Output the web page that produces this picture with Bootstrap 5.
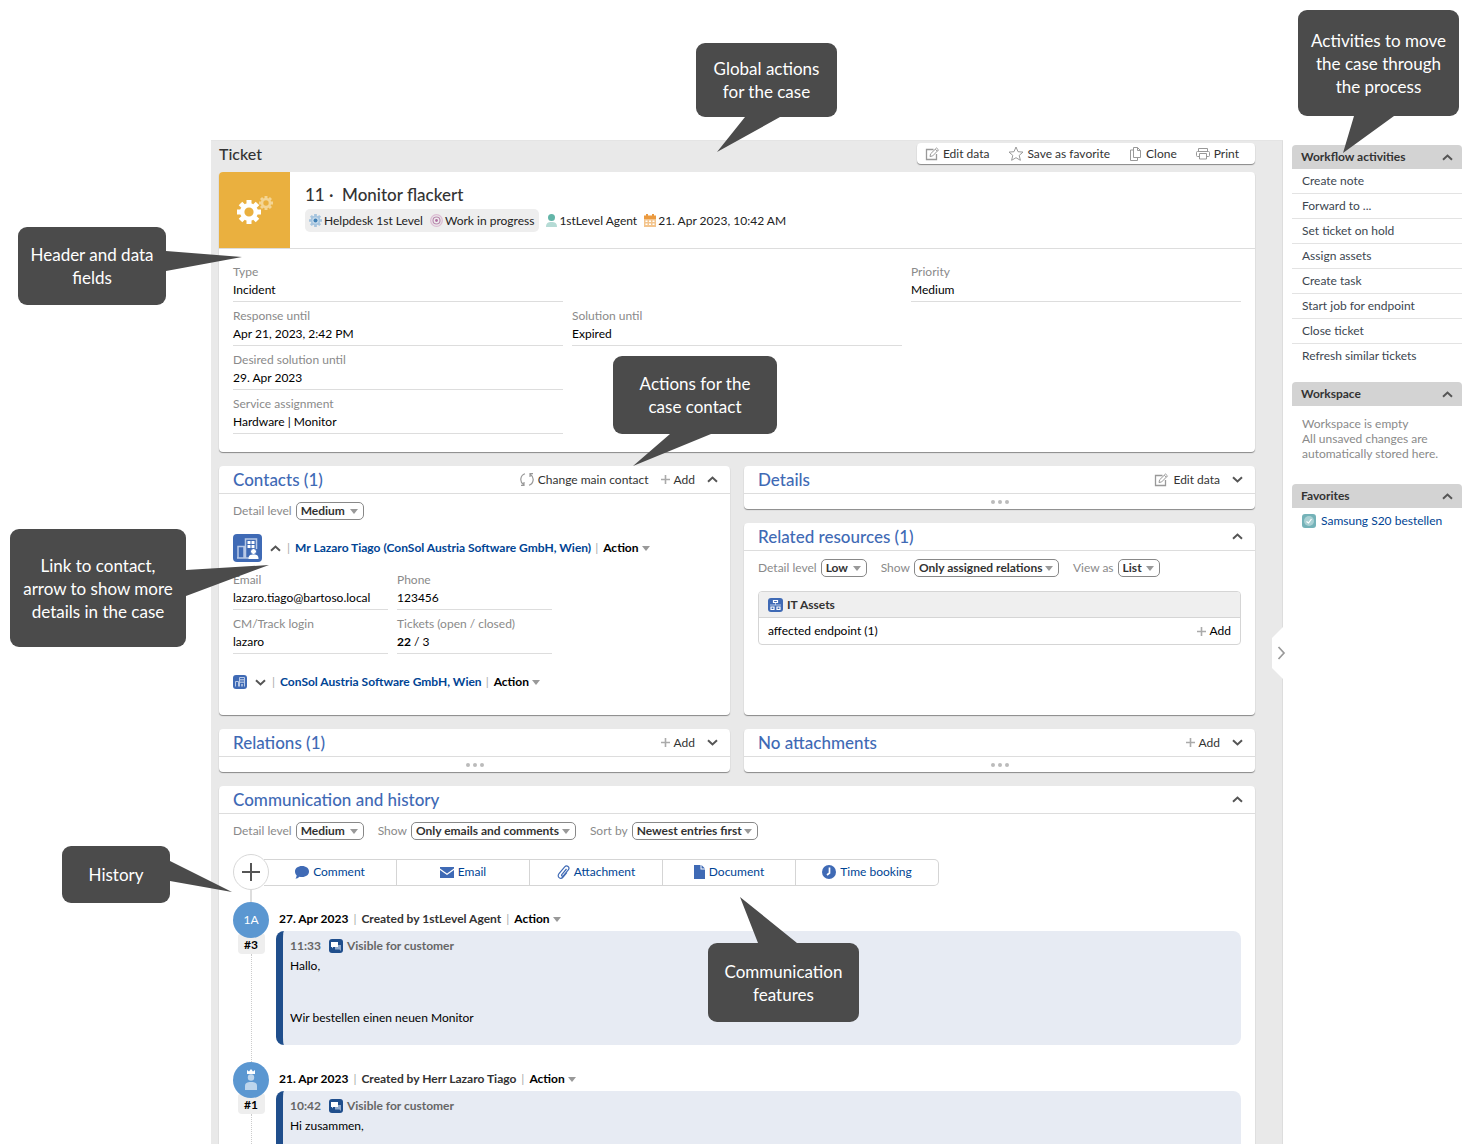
<!DOCTYPE html>
<html lang="en">
<head>
<meta charset="utf-8">
<meta name="viewport" content="width=device-width, initial-scale=1">
<title>Ticket 11 - Monitor flackert</title>
<link href="https://cdn.jsdelivr.net/npm/bootstrap@5.3.0/dist/css/bootstrap.min.css" rel="stylesheet">
<style>
:root{--blue:#3f6ab5;--link:#004494;--line:#ddd;--muted:#8a8a8a;--ink:#333;--icon:#999}
body{font-family:Lato,Carlito,"Open Sans",sans-serif;font-size:12px;line-height:16px;color:#000;background:#fff}
button{font:inherit;color:inherit;background:none;border:0;padding:0}
a{text-decoration:none;color:var(--link)}
svg{flex:none;display:block}
.shell{height:100vh;overflow:hidden;padding:140px 0 0 211px}
.main-pane{background:#e9e9e9;padding:2px 27px 0 8px;min-width:0;border-top:1px solid #e4e4e4;border-right:1px solid #ddd}
.page-title{font-size:16px;line-height:22px;color:var(--ink);margin:0}
.topbar{height:22px;margin-bottom:7px}
.tools{border-radius:4px;box-shadow:0 1px 1px #888;background:#fff}
.tool-btn{height:21px;color:var(--ink);gap:3px;padding:0 14px 0 5px}
.tools .tool-btn:first-child{padding-left:8px}
.tools .tool-btn:last-child{padding-right:16px}
.panel{background:#fff;border-radius:4px;box-shadow:0 1px 1px #888}
.stack{gap:14px}
.case-head{height:77px;border-bottom:1px solid var(--line)}
.case-icon{width:71px;background:#eab03f;border-radius:4px 0 0 0}
.case-text{padding:13px 0 0 15px}
.case-name{font-size:17px;line-height:20px;color:var(--ink);margin:0 0 4px;white-space:pre}
.chip-group{background:#eee;border-radius:5px;height:23px;padding:0 5px 0 4px;gap:7px}
.meta{gap:7px;color:#222}
.meta span{gap:2px}
.case-fields{display:grid;grid-template-columns:repeat(3,1fr);column-gap:9px;padding:15px 14px 12px}
.field{height:38px;margin-bottom:6px;border-bottom:1px solid var(--line)}
.field dt{font-weight:400;color:var(--muted);line-height:16px}
.field dd{margin:0;line-height:20px;white-space:nowrap}
.panel-head{height:28px;border-bottom:1px solid var(--line);padding:0 12px 0 14px;color:var(--ink)}
.panel-head h2{font-size:17px;line-height:20px;margin:0;color:var(--blue)}
.dots{height:15px;gap:3px}
.dots i{width:4px;height:4px;border-radius:2px;background:#bbb}
.filter{color:var(--muted);gap:4px}
.filters{padding:8px 14px 0;gap:14px}
.pick{height:18px;border:1px solid #888;border-radius:5px;font-weight:700;font-size:12px;line-height:14px;color:var(--ink);padding:0 0 0 4px;appearance:none;background:#fff url("data:image/svg+xml,%3Csvg xmlns='http://www.w3.org/2000/svg' width='8' height='5'%3E%3Cpath d='M0 0h8L4 5z' fill='%23999'/%3E%3C/svg%3E") no-repeat right 5px center}
.w-low{width:46px}.w-list{width:42px}.w-medium{width:68px}.w-rel{width:145px}.w-show{width:165px}.w-sort{width:126px}
.caret-s{width:0;height:0;border:4px solid transparent;border-top:5px solid #999;border-bottom:0;margin-left:3px}
.bar{color:#aaa;font-weight:400}
.contact-body{padding:8px 14px 25px}
.contact-line .bar{margin:0 5px 0 4px}
.contact-line .bar:first-of-type{margin-left:0}
.toggle{padding:0 6px 0 8px}
.contact-main{margin:14px 0 10px}
.company{padding-top:14px}
.contact-fields{display:grid;grid-template-columns:155px 155px;column-gap:9px}
.assets{border:1px solid #d5d5d5;border-radius:4px;overflow:hidden;margin:14px 14px 0}
.assets-head{background:#efefef;height:26px;border-bottom:1px solid #d5d5d5;padding:0 9px;color:var(--ink)}
.assets-row{height:26px;padding:0 9px}
.history{padding:14px 14px 0}
.compose{height:36px}
.plus-btn{width:36px;height:36px;border:1px solid #d8d8d8;border-radius:50%;background:#fff;z-index:1}
.compose-bar{height:27px;border:1px solid #d5d5d5;border-left:0;border-radius:0 5px 5px 0;margin-left:-5px;color:var(--link)}
.compose-bar button{width:133px;border-right:1px solid #d5d5d5;gap:4px}
.compose-bar button:last-child{width:142px;border-right:0}
.entry{gap:7px;min-height:160px}
.rail{width:36px}
.rail .stem{width:1px;border-left:1px dotted #ccc}
.link-stem{width:2px;height:12px;background:#ddd;margin-left:17px}
.avatar{width:36px;height:36px;border-radius:50%;background:#5b97d1;color:#fff;z-index:1}
.entry-no{background:#eee;border-radius:4px;width:27px;height:21px;margin-top:-5px;padding-top:4px;line-height:16px;font-weight:700}
.entry-head{height:29px;padding:9px 0 0 3px;gap:5px;font-weight:700}
.by-line{color:#333}
.message{background:#e7ebf3;border-left:7px solid #1f4e8c;border-radius:8px;height:114px;padding:7px}
.wish{margin-top:36px}
.grey{color:#666}
.side{width:182px;padding:5px 3px 0 9px}
.side-head{height:24px;background:#d3d3d3;border-radius:4px 4px 0 0;padding:0 9px;font-weight:700;color:var(--ink)}
.side-head h2{font-size:12px;line-height:16px;font-weight:700;margin:0}
.flow-list{min-height:209px}
.side li{height:25px;line-height:24px;border-bottom:1px solid #e3e3e3;padding-left:10px}
.side li:last-child{border:0}
.side li a{color:#3c4650}
.empty-note{line-height:15px;color:var(--muted);padding:10px 10px 23px}
.favorite{padding:5px 10px;gap:5px}
.drawer{left:-12px;top:487px}
.callout{position:absolute;background:#4b4b4b;color:#fff;border-radius:9px;font-size:17px;line-height:23px;text-align:center;z-index:5;display:flex;align-items:center;justify-content:center}
.callout svg{position:absolute;fill:#4b4b4b}
.c-global{left:696px;top:43px;width:141px;height:74px}.c-global svg{left:20px;top:73px}
.c-flow{left:1298px;top:10px;width:161px;height:106px}.c-flow svg{left:44px;top:105px}
.c-head{left:18px;top:227px;width:148px;height:78px}.c-head svg{left:147px;top:24px}
.c-contact{left:613px;top:356px;width:164px;height:78px}.c-contact svg{left:19px;top:77px}
.c-link{left:10px;top:529px;width:176px;height:118px}.c-link svg{left:175px;top:35px}
.c-hist{left:62px;top:846px;width:108px;height:57px}.c-hist svg{left:107px;top:14px}
.c-comm{left:708px;top:943px;width:151px;height:79px}.c-comm svg{left:31px;top:-46px}
</style>
<script src="https://cdn.jsdelivr.net/npm/bootstrap@5.3.0/dist/js/bootstrap.bundle.min.js"></script>
</head>
<body class="position-relative">
<svg class="d-none">
<symbol id="edit" viewBox="0 0 15 14"><path d="M8.500 2.500H1.500v10h10V7" fill="none" stroke="#999" stroke-width="1.300"/><path d="M5 9.500l.6-2.700L11.500 1l2 1.900-5.800 6zM10.300 2.200l2 2" fill="none" stroke="#999"/></symbol>
<symbol id="up" viewBox="0 0 11 7"><path d="M1 5.800L5.500 1.600 10 5.800" fill="none" stroke="#555" stroke-width="2"/></symbol>
<symbol id="down" viewBox="0 0 11 7"><path d="M1 1.200l4.500 4.200L10 1.200" fill="none" stroke="#555" stroke-width="2"/></symbol>
<symbol id="plus" viewBox="0 0 9 9"><path d="M4.500 0v9M0 4.500h9" stroke="#aaa" stroke-width="1.600"/></symbol>
<symbol id="gear" viewBox="-12 -12 24 24"><circle r="6.800" fill="none" stroke="currentColor" stroke-width="4.400"/><path d="M0-12V-8M0 12V8M-12 0H-8M12 0H8M-8.500-8.500L-5.700-5.700M8.500 8.500L5.700 5.700M-8.500 8.500L-5.700 5.700M8.500-8.500L5.700-5.700" stroke="currentColor" stroke-width="5"/></symbol>
<symbol id="chat" viewBox="0 0 14 14"><rect width="14" height="14" rx="3" fill="#1f4e8c"/><path d="M6 6h6v6l-1.500-1.500H6z" fill="#8fa9cc"/><path d="M2 3h7v5H4L3 9.500V8H2z" fill="#fff"/></symbol>
</svg>

<div class="shell d-flex">
<main class="main-pane flex-grow-1">
  <div class="topbar d-flex justify-content-between align-items-start">
    <h1 class="page-title">Ticket</h1>
    <div class="tools d-flex" role="group" aria-label="Case actions">
      <button class="tool-btn d-flex align-items-center"><svg width="15" height="14"><use href="#edit"/></svg>Edit data</button>
      <button class="tool-btn d-flex align-items-center"><svg width="16" height="15" viewBox="0 0 16 15"><path d="M8 1l2 4.700 5 .4-3.800 3.300 1.200 4.900L8 11.700l-4.400 2.600 1.200-4.900L1 6.100l5-.4z" fill="none" stroke="#999"/></svg>Save as favorite</button>
      <button class="tool-btn d-flex align-items-center"><svg width="14" height="14" viewBox="0 0 14 14"><path d="M4.500.5h4l3 3v7h-7zM8.500.5v3h3M4.500 3h-3v10.500h7v-3" fill="none" stroke="#999"/></svg>Clone</button>
      <button class="tool-btn d-flex align-items-center"><svg width="15" height="12" viewBox="0 0 15 12"><path d="M3 3.500h-1.500a1 1 0 0 0-1 1v3a1 1 0 0 0 1 1H3M2.500 3V.5h9V3M3.500 5.500h7v5.500h-7zM11 8.500h1.500a1 1 0 0 0 1-1v-3a1 1 0 0 0-1-1H2" fill="none" stroke="#999"/></svg>Print</button>
    </div>
  </div>

  <div class="stack d-flex flex-column">
  <section class="panel">
    <div class="case-head d-flex">
      <div class="case-icon d-flex align-items-center justify-content-center">
        <svg width="38" height="30" viewBox="0 0 38 30"><svg x="1" y="5" width="24" height="24" color="#fff"><use href="#gear"/></svg><svg x="23" y="1" width="14" height="14" color="#f4d594"><use href="#gear"/></svg></svg>
      </div>
      <div class="case-text">
        <h2 class="case-name">11 ·  Monitor flackert</h2>
        <div class="meta d-flex align-items-center">
          <div class="chip-group d-flex align-items-center">
            <span class="d-flex align-items-center"><svg width="13" height="13" color="#a5c4de"><use href="#gear"/><circle cx="6.500" cy="6.500" r="3.200" fill="#c9dcec"/><circle cx="6.500" cy="6.500" r="2" fill="#3f80b5"/></svg>Helpdesk 1st Level</span>
            <span class="d-flex align-items-center"><svg width="13" height="13" viewBox="0 0 13 13" fill="none"><circle cx="6.500" cy="6.500" r="5.800" stroke="#dcbcd3" stroke-width="1.300"/><circle cx="6.500" cy="6.500" r="3.500" stroke="#b988ae" stroke-width="1.200"/><circle cx="6.500" cy="6.500" r="1.400" fill="#b06fa2"/></svg>Work in progress</span>
          </div>
          <span class="d-flex align-items-center"><svg width="11" height="13" viewBox="0 0 11 13"><circle cx="5.500" cy="3.500" r="3.500" fill="#63b5a8"/><path d="M0 13c0-4 2-5 5.500-5S11 9 11 13z" fill="#b5dbd5"/></svg>1stLevel Agent</span>
          <span class="d-flex align-items-center"><svg width="12" height="13" viewBox="0 0 12 13"><path d="M0 1.500h12V5H0zM2 0h2v3H2zM8 0h2v3H8z" fill="#eb9a3f"/><path d="M0 5h12v8H0z" fill="#f3c48c"/><path d="M1.500 6.500h2v1.500h-2zM5 6.500h2v1.500H5zM8.500 6.500h2v1.500h-2zM1.500 9.500h2V11h-2zM5 9.500h2V11H5zM8.500 9.500h2V11h-2z" fill="#fff"/></svg>21. Apr 2023, 10:42 AM</span>
        </div>
      </div>
    </div>
    <div class="case-fields">
      <dl class="field"><dt>Type</dt><dd>Incident</dd></dl><div></div>
      <dl class="field"><dt>Priority</dt><dd>Medium</dd></dl>
      <dl class="field"><dt>Response until</dt><dd>Apr 21, 2023, 2:42 PM</dd></dl>
      <dl class="field"><dt>Solution until</dt><dd>Expired</dd></dl><div></div>
      <dl class="field"><dt>Desired solution until</dt><dd>29. Apr 2023</dd></dl><div></div><div></div>
      <dl class="field"><dt>Service assignment</dt><dd>Hardware | Monitor</dd></dl>
    </div>
  </section>

  <div class="stack d-flex">
    <section class="panel flex-fill w-50">
      <div class="panel-head d-flex align-items-center">
        <h2 class="me-auto">Contacts (1)</h2>
        <button class="d-flex align-items-center gap-1 me-2"><svg width="14" height="15" viewBox="0 0 14 15"><path d="M5 1.800A6 6 0 0 0 3.500 12.500M9 13.200A6 6 0 0 0 10.500 2.500M1 13.300H4V10M13 1.700H10V5" fill="none" stroke="#999" stroke-width="1.200"/></svg>Change main contact</button>
        <button class="d-flex align-items-center gap-1 me-2 ps-1"><svg width="9" height="9"><use href="#plus"/></svg>Add</button>
        <button class="ps-1" aria-label="Collapse contacts"><svg width="11" height="7"><use href="#up"/></svg></button>
      </div>
      <div class="contact-body">
        <div class="filter d-flex align-items-center"><label for="cdl">Detail level</label><select id="cdl" class="pick w-medium"><option>Medium</option></select></div>
        <div class="contact-main contact-line d-flex align-items-center fw-bold">
          <svg width="29" height="28" viewBox="0 0 29 28"><rect width="29" height="28" rx="4" fill="#3f6ab5"/><path d="M5 24V12.500h6V24M12.500 24V5h11v10M4 24h13" fill="none" stroke="#b8c9e6" stroke-width="1.500"/><path d="M14.500 7h3v3h-3zM18.500 7h3v3h-3zM14.500 11h3v3h-3zM18.500 11h3v3h-3z" fill="#fff"/><circle cx="20.500" cy="17.500" r="3" fill="#fff" stroke="#3f6ab5"/><path d="M15.500 25c0-4 2-4.500 5-4.500s5 .5 5 4.500z" fill="#fff"/></svg>
          <button class="toggle" aria-label="Hide contact details"><svg width="11" height="7"><use href="#up"/></svg></button>
          <span class="bar">|</span><a href="#" class="text-nowrap">Mr Lazaro Tiago (ConSol Austria Software GmbH, Wien)</a><span class="bar">|</span>
          <button class="fw-bold d-flex align-items-center">Action<i class="caret-s"></i></button>
        </div>
        <div class="contact-fields">
          <dl class="field"><dt>Email</dt><dd>lazaro.tiago@bartoso.local</dd></dl>
          <dl class="field"><dt>Phone</dt><dd>123456</dd></dl>
          <dl class="field"><dt>CM/Track login</dt><dd>lazaro</dd></dl>
          <dl class="field"><dt>Tickets (open / closed)</dt><dd><b>22</b> / 3</dd></dl>
        </div>
        <div class="d-flex align-items-center fw-bold company contact-line">
          <svg width="14" height="14" viewBox="0 0 14 14"><rect width="14" height="14" rx="3" fill="#3f6ab5"/><path d="M2.500 11.500V6.500h3v5M6.500 11.500v-9h5v9" fill="none" stroke="#b8c9e6"/><path d="M7.500 4h1v1.500h-1zM9.500 4h1v1.500h-1zM7.500 6.500h1V8h-1zM9.500 6.500h1V8h-1zM8.500 9h1v2.500h-1z" fill="#fff"/></svg>
          <button class="toggle" aria-label="Show company details"><svg width="11" height="7"><use href="#down"/></svg></button>
          <span class="bar">|</span><a href="#">ConSol Austria Software GmbH, Wien</a><span class="bar">|</span>
          <button class="fw-bold d-flex align-items-center">Action<i class="caret-s"></i></button>
        </div>
      </div>
    </section>

    <div class="stack d-flex flex-column flex-fill w-50">
      <section class="panel">
        <div class="panel-head d-flex align-items-center">
          <h2 class="me-auto">Details</h2>
          <button class="d-flex align-items-center gap-1 me-2"><svg width="15" height="14"><use href="#edit"/></svg>Edit data</button>
          <button class="ps-1" aria-label="Expand details"><svg width="11" height="7"><use href="#down"/></svg></button>
        </div>
        <div class="dots d-flex align-items-center justify-content-center"><i></i><i></i><i></i></div>
      </section>
      <section class="panel flex-grow-1">
        <div class="panel-head d-flex align-items-center">
          <h2 class="me-auto">Related resources (1)</h2>
          <button aria-label="Collapse related resources"><svg width="11" height="7"><use href="#up"/></svg></button>
        </div>
        <div class="filters d-flex">
          <div class="filter d-flex align-items-center"><label for="rdl">Detail level</label><select id="rdl" class="pick w-low"><option>Low</option></select></div>
          <div class="filter d-flex align-items-center"><label for="rsh">Show</label><select id="rsh" class="pick w-rel"><option>Only assigned relations</option></select></div>
          <div class="filter d-flex align-items-center"><label for="rvw">View as</label><select id="rvw" class="pick w-list"><option>List</option></select></div>
        </div>
        <div class="assets">
          <div class="assets-head d-flex align-items-center fw-bold"><svg class="me-1" width="15" height="14" viewBox="0 0 15 14"><rect width="15" height="14" rx="3" fill="#3f6ab5"/><path d="M5.500 2.500h4v2h-4zM3 9h3v2.500H3zM9 9h3v2.500H9z" fill="none" stroke="#fff" stroke-width="1.200"/><path d="M7.500 5v2M2 7h11" stroke="#b8c9e6"/></svg>IT Assets</div>
          <div class="assets-row d-flex align-items-center justify-content-between"><span>affected endpoint (1)</span><button class="d-flex align-items-center gap-1"><svg width="9" height="9"><use href="#plus"/></svg>Add</button></div>
        </div>
      </section>
    </div>
  </div>

  <div class="stack d-flex">
    <section class="panel w-50">
      <div class="panel-head d-flex align-items-center"><h2 class="me-auto">Relations (1)</h2>
        <button class="d-flex align-items-center gap-1 me-2"><svg width="9" height="9"><use href="#plus"/></svg>Add</button>
        <button class="ps-1" aria-label="Expand relations"><svg width="11" height="7"><use href="#down"/></svg></button></div>
      <div class="dots d-flex align-items-center justify-content-center"><i></i><i></i><i></i></div>
    </section>
    <section class="panel w-50">
      <div class="panel-head d-flex align-items-center"><h2 class="me-auto">No attachments</h2>
        <button class="d-flex align-items-center gap-1 me-2"><svg width="9" height="9"><use href="#plus"/></svg>Add</button>
        <button class="ps-1" aria-label="Expand attachments"><svg width="11" height="7"><use href="#down"/></svg></button></div>
      <div class="dots d-flex align-items-center justify-content-center"><i></i><i></i><i></i></div>
    </section>
  </div>

  <section class="panel">
    <div class="panel-head d-flex align-items-center"><h2 class="me-auto">Communication and history</h2>
      <button aria-label="Collapse history"><svg width="11" height="7"><use href="#up"/></svg></button></div>
    <div class="filters d-flex">
      <div class="filter d-flex align-items-center"><label for="hdl">Detail level</label><select id="hdl" class="pick w-medium"><option>Medium</option></select></div>
      <div class="filter d-flex align-items-center"><label for="hsh">Show</label><select id="hsh" class="pick w-show"><option>Only emails and comments</option></select></div>
      <div class="filter d-flex align-items-center"><label for="hso">Sort by</label><select id="hso" class="pick w-sort"><option>Newest entries first</option></select></div>
    </div>
    <div class="history">
      <div class="compose d-flex align-items-center">
        <button class="plus-btn d-flex align-items-center justify-content-center" aria-label="Add entry"><svg width="18" height="18" viewBox="0 0 18 18"><path d="M9 0v18M0 9h18" stroke="#555" stroke-width="2"/></svg></button>
        <div class="compose-bar d-flex">
          <button class="d-flex align-items-center justify-content-center"><svg width="14" height="13" viewBox="0 0 14 13"><path d="M7 0c4 0 7 2.300 7 5.500S11 11 7 11c-1 0-1.700-.1-2.500-.3C3.300 12 1.800 12.600.3 12.600 1.300 11.600 1.600 10.500 1.600 9.200.5 8.200 0 7 0 5.500 0 2.300 3 0 7 0z" fill="#3f6ab5"/></svg>Comment</button>
          <button class="d-flex align-items-center justify-content-center"><svg width="14" height="11" viewBox="0 0 14 11"><path d="M0 0h14v1.500L7 6.500 0 1.500zM0 3l7 5 7-5v8H0z" fill="#3f6ab5"/></svg>Email</button>
          <button class="d-flex align-items-center justify-content-center"><svg width="13" height="14" viewBox="0 0 13 14"><path d="M9.500 4L4.800 9.600c-.8 1 .6 2.200 1.500 1.200l5-6c2-2.500-1.500-5.300-3.600-2.900L2 8.700c-2.500 3.100 1.500 6.300 4.100 3.300L10 7.300" fill="none" stroke="#3f6ab5" stroke-width="1.200"/></svg>Attachment</button>
          <button class="d-flex align-items-center justify-content-center"><svg width="11" height="14" viewBox="0 0 11 14"><path d="M0 0h6.500v4.500H11V14H0zM7.500 0L11 3.500H7.500z" fill="#3f6ab5"/></svg>Document</button>
          <button class="d-flex align-items-center justify-content-center"><svg width="14" height="14" viewBox="0 0 14 14"><circle cx="7" cy="7" r="7" fill="#3f6ab5"/><path d="M7.500 2.500V8L5 10" fill="none" stroke="#fff" stroke-width="1.700"/></svg>Time booking</button>
        </div>
      </div>
      <div class="link-stem"></div>
      <article class="entry d-flex">
        <div class="rail d-flex flex-column align-items-center">
          <div class="avatar d-flex align-items-center justify-content-center flex-shrink-0">1A</div>
          <div class="entry-no text-center flex-shrink-0">#3</div><div class="stem flex-grow-1"></div>
        </div>
        <div class="flex-grow-1">
          <div class="entry-head d-flex align-items-start"><span>27. Apr 2023</span><span class="bar">|</span><span class="by-line">Created by 1stLevel Agent</span><span class="bar">|</span><button class="fw-bold d-flex align-items-center">Action<i class="caret-s"></i></button></div>
          <div class="message">
            <div class="d-flex align-items-center fw-bold grey mb-1"><span class="me-2">11:33</span><svg class="me-1" width="14" height="14"><use href="#chat"/></svg>Visible for customer</div>
            <div>Hallo,</div><div class="wish">Wir bestellen einen neuen Monitor</div>
          </div>
        </div>
      </article>
      <article class="entry d-flex">
        <div class="rail d-flex flex-column align-items-center">
          <div class="avatar d-flex align-items-center justify-content-center flex-shrink-0"><svg width="14" height="22" viewBox="0 0 14 22"><path d="M3 1l2 1.500L7 0l2 2.500L11 1v4H3z" fill="#fff"/><circle cx="7" cy="8.500" r="3.200" fill="#bdd5ec"/><path d="M1 21v-4c0-3 2-4 6-4s6 1 6 4v4z" fill="#bdd5ec"/></svg></div>
          <div class="entry-no text-center flex-shrink-0">#1</div><div class="stem flex-grow-1"></div>
        </div>
        <div class="flex-grow-1">
          <div class="entry-head d-flex align-items-start"><span>21. Apr 2023</span><span class="bar">|</span><span class="by-line">Created by Herr Lazaro Tiago</span><span class="bar">|</span><button class="fw-bold d-flex align-items-center">Action<i class="caret-s"></i></button></div>
          <div class="message">
            <div class="d-flex align-items-center fw-bold grey mb-1"><span class="me-2">10:42</span><svg class="me-1" width="14" height="14"><use href="#chat"/></svg>Visible for customer</div>
            <div>Hi zusammen,</div>
          </div>
        </div>
      </article>
    </div>
  </section>
  </div>
</main>

<aside class="side position-relative flex-shrink-0">
  <button class="drawer position-absolute" aria-label="Hide side panel"><svg width="15" height="52" viewBox="0 0 15 52"><path d="M12 0L1 11v30l11 11h3V0z" fill="#fff"/><path d="M7.500 20l5.500 6-5.500 6" fill="none" stroke="#999" stroke-width="1.700"/></svg></button>
  <section>
    <div class="side-head d-flex align-items-center justify-content-between"><h2>Workflow activities</h2><button aria-label="Collapse activities"><svg width="11" height="7"><use href="#up"/></svg></button></div>
    <ul class="list-unstyled mb-0 pb-2 flow-list">
      <li><a href="#">Create note</a></li><li><a href="#">Forward to ...</a></li><li><a href="#">Set ticket on hold</a></li><li><a href="#">Assign assets</a></li><li><a href="#">Create task</a></li><li><a href="#">Start job for endpoint</a></li><li><a href="#">Close ticket</a></li><li><a href="#">Refresh similar tickets</a></li>
    </ul>
  </section>
  <section class="pt-1">
    <div class="side-head d-flex align-items-center justify-content-between"><h2>Workspace</h2><button aria-label="Collapse workspace"><svg width="11" height="7"><use href="#up"/></svg></button></div>
    <div class="empty-note">Workspace is empty<br>All unsaved changes are automatically stored here.</div>
  </section>
  <section>
    <div class="side-head d-flex align-items-center justify-content-between"><h2>Favorites</h2><button aria-label="Collapse favorites"><svg width="11" height="7"><use href="#up"/></svg></button></div>
    <a href="#" class="favorite d-flex align-items-center"><svg width="14" height="14" viewBox="0 0 14 14"><rect width="14" height="14" rx="3" fill="#74b2b8"/><circle cx="7" cy="7" r="5" fill="#a9d0d3"/><path d="M4.500 7.500l2 1.500 3-4" fill="none" stroke="#fff" stroke-width="1.200"/></svg>Samsung S20 bestellen</a>
  </section>
</aside>
</div>

<div class="callout c-global"><svg width="65" height="37"><path d="M29 0h35v1L1 36 29 1z"/></svg>Global actions<br>for the case</div>
<div class="callout c-flow"><svg width="54" height="40"><path d="M12 0h42L52 1 1 38 12 1z"/></svg>Activities to move<br>the case through<br>the process</div>
<div class="callout c-head"><svg width="78" height="22"><path d="M0 0h1l76 6L1 20H0z"/></svg>Header and data<br>fields</div>
<div class="callout c-contact"><svg width="80" height="34"><path d="M38 0h41v1L1 33 38 1z"/></svg>Actions for the<br>case contact</div>
<div class="callout c-link"><svg width="86" height="34"><path d="M0 6h1L84 1 1 32H0z"/></svg>Link to contact,<br>arrow to show more<br>details in the case</div>
<div class="callout c-hist"><svg width="65" height="34"><path d="M0 1h1l62 31L1 21H0z"/></svg>History</div>
<div class="callout c-comm"><svg width="60" height="48"><path d="M1 0l57 46v1H19v-1z"/></svg>Communication<br>features</div>
</body>
</html>
